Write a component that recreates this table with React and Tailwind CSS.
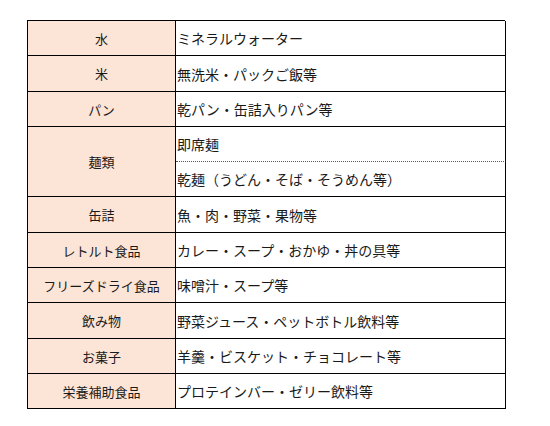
import React from 'react';

const rows = [
  { label: '水', items: ['ミネラルウォーター'] },
  { label: '米', items: ['無洗米・パックご飯等'] },
  { label: 'パン', items: ['乾パン・缶詰入りパン等'] },
  { label: '麺類', items: ['即席麺', '乾麺（うどん・そば・そうめん等）'] },
  { label: '缶詰', items: ['魚・肉・野菜・果物等'] },
  { label: 'レトルト食品', items: ['カレー・スープ・おかゆ・丼の具等'] },
  { label: 'フリーズドライ食品', items: ['味噌汁・スープ等'] },
  { label: '飲み物', items: ['野菜ジュース・ペットボトル飲料等'] },
  { label: 'お菓子', items: ['羊羹・ビスケット・チョコレート等'] },
  { label: '栄養補助食品', items: ['プロテインバー・ゼリー飲料等'] },
];

export default function App() {
  return (
    <div
      className="w-[550px] h-[426px] bg-white pt-[20px] pl-[27px] text-[#1a1a1a]"
      style={{ fontFamily: '"Noto Sans CJK JP", "Noto Sans", sans-serif' }}
    >
      <div className="grid w-[478px] grid-cols-[148px_330px] grid-rows-[35px_36px_35px_35px_35px_36px_35px_35px_36px_35px_35px] border-t border-l border-black leading-none">
        {rows.map((row) => (
          <React.Fragment key={row.label}>
            <div
              className={`flex items-center justify-center border-r border-b border-black bg-[#fce4d6] text-[13px] ${
                row.items.length > 1 ? 'row-span-2' : ''
              }`}
            >
              {row.label}
            </div>
            {row.items.map((item, i) => (
              <div
                key={item}
                className={`flex items-center pl-[1px] text-[14px] border-r border-b border-r-black ${
                  i < row.items.length - 1 ? '[border-bottom-style:dotted] border-b-[#555]' : 'border-b-black'
                }`}
              >
                {item}
              </div>
            ))}
          </React.Fragment>
        ))}
      </div>
    </div>
  );
}
